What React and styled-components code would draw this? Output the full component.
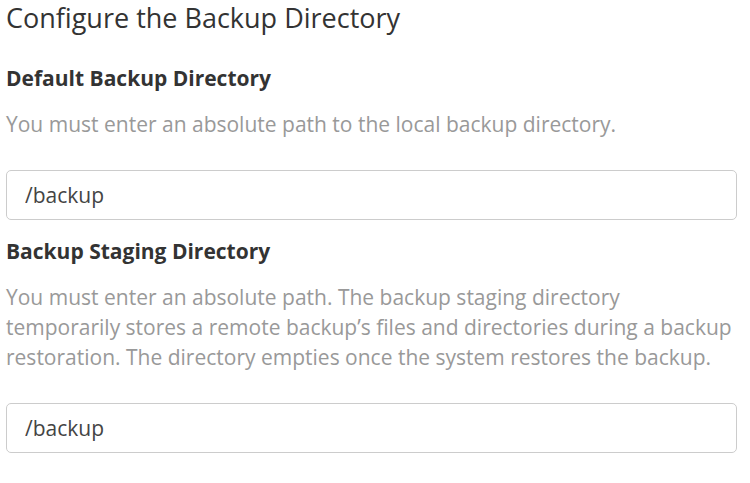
import React from 'react'
import styled, { createGlobalStyle } from 'styled-components'

const GlobalStyle = createGlobalStyle`
  body {
    margin: 0;
    background: #fff;
    font-family: "Open Sans", "Noto Sans", sans-serif;
  }
`

const Page = styled.div`
  padding: 0 13px 0 6px;
`

const Heading = styled.h1`
  margin: 0;
  font-size: 27px;
  font-weight: 400;
  line-height: 36px;
  color: #333;
`

const Field = styled.div`
  margin-top: ${({ first }) => (first ? '28px' : '17px')};
`

const Label = styled.label`
  display: block;
  font-size: 21px;
  font-weight: 700;
  line-height: 28px;
  color: #333;
`

const Help = styled.p`
  margin: 17px 0 0;
  font-size: 21px;
  line-height: 30px;
  color: #999;
`

const Input = styled.input`
  display: block;
  box-sizing: border-box;
  width: 100%;
  height: 50px;
  margin-top: 31px;
  padding: 0 18px;
  border: 1px solid #ccc;
  border-radius: 5px;
  font-family: inherit;
  font-size: 21px;
  color: #444;
  background: #fff;
  outline: none;
`

const App = () => (
  <>
    <GlobalStyle />
    <Page>
      <Heading>Configure the Backup Directory</Heading>
      <Field first>
        <Label>Default Backup Directory</Label>
        <Help>You must enter an absolute path to the local backup directory.</Help>
        <Input defaultValue="/backup" />
      </Field>
      <Field>
        <Label>Backup Staging Directory</Label>
        <Help>
          You must enter an absolute path. The backup staging directory temporarily stores a remote
          backup’s files and directories during a backup restoration. The directory empties once the
          system restores the backup.
        </Help>
        <Input defaultValue="/backup" />
      </Field>
    </Page>
  </>
)

export default App
